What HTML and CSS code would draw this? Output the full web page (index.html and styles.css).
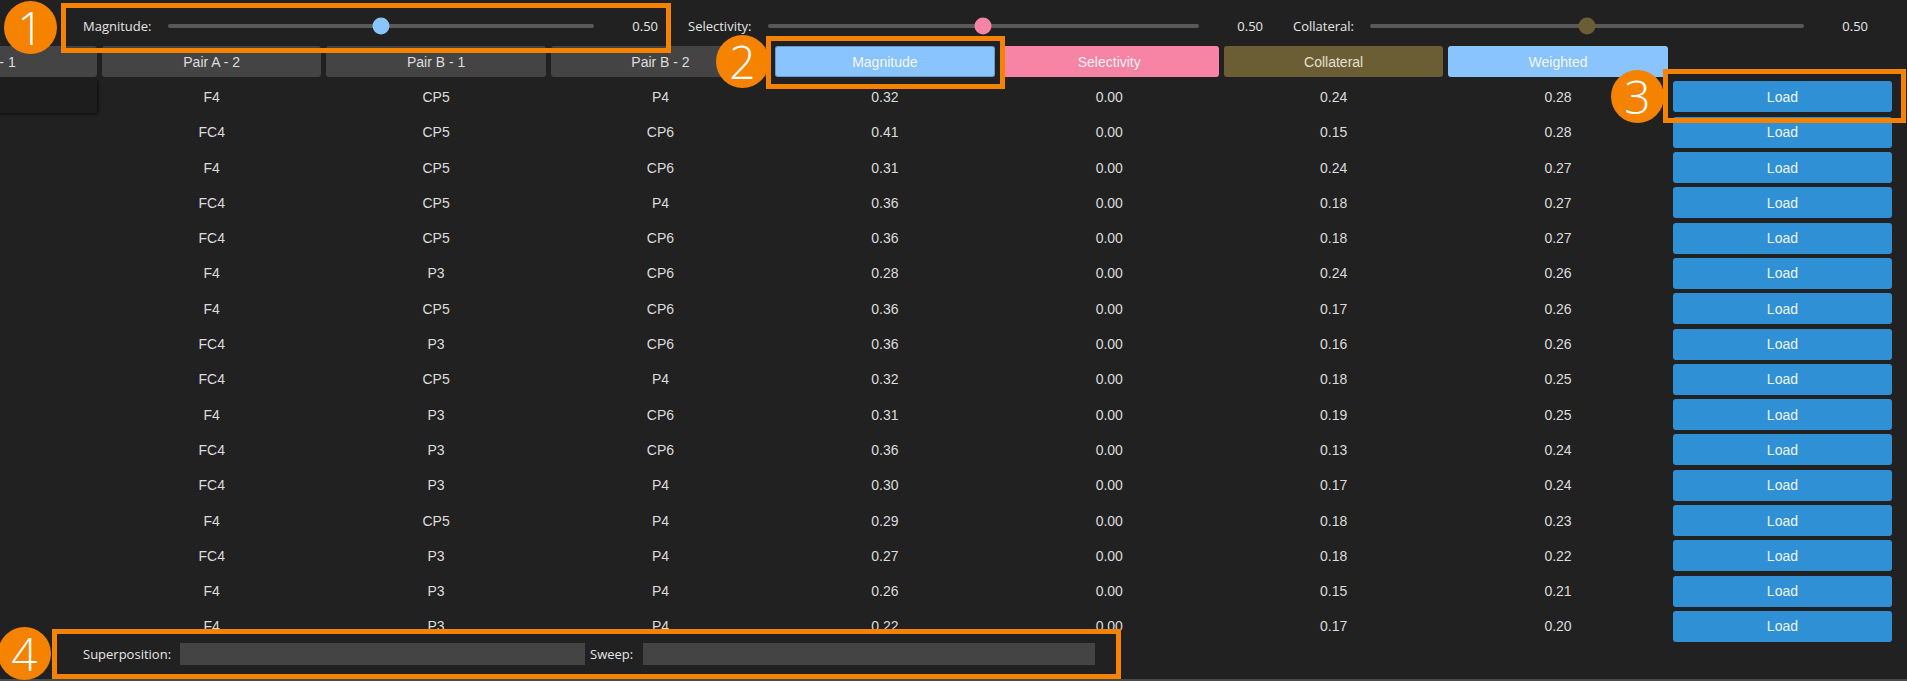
FILE: index.html
```html
<!DOCTYPE html>
<html>
<head>
<meta charset="utf-8">
<link rel="stylesheet" href="styles.css">
</head>
<body>
<div class="app">
  <div class="sliders">
    <div class="sg">
      <span class="sl">Magnitude:</span>
      <div class="track"><div class="thumb t-mag" style="left:50%"></div></div>
      <span class="sv">0.50</span>
    </div>
    <div class="sg">
      <span class="sl">Selectivity:</span>
      <div class="track"><div class="thumb t-sel" style="left:50%"></div></div>
      <span class="sv">0.50</span>
    </div>
    <div class="sg">
      <span class="sl">Collateral:</span>
      <div class="track"><div class="thumb t-col" style="left:50%"></div></div>
      <span class="sv">0.50</span>
    </div>
  </div>

  <div class="table-clip">
    <div class="grid" id="grid">
      <div class="cell h">Pair A - 1</div>
      <div class="cell h">Pair A - 2</div>
      <div class="cell h">Pair B - 1</div>
      <div class="cell h">Pair B - 2</div>
      <div class="cell h h-mag">Magnitude</div>
      <div class="cell h h-sel">Selectivity</div>
      <div class="cell h h-col">Collateral</div>
      <div class="cell h h-wei">Weighted</div>
      <div class="cell blank"></div>
    </div>
  </div>

  <div class="bottom-bar">
    <span class="bl">Superposition:</span>
    <div class="inp inp-sup"></div>
    <span class="bl bl-sweep">Sweep:</span>
    <div class="inp inp-sweep"></div>
  </div>
  <div class="bottom-line"></div>

  <div class="ann-box box1"></div>
  <div class="ann-box box2"></div>
  <div class="ann-box box3"></div>
  <div class="ann-box box4"></div>
  <div class="ann-num n1">1</div>
  <div class="ann-num n2">2</div>
  <div class="ann-num n3">3</div>
  <div class="ann-num n4">4</div>
</div>
<script src="app.js"></script>
</body>
</html>
```

FILE: app.js
```js
var rows = [
  ["F4","CP5","P4","0.32","0.00","0.24","0.28"],
  ["FC4","CP5","CP6","0.41","0.00","0.15","0.28"],
  ["F4","CP5","CP6","0.31","0.00","0.24","0.27"],
  ["FC4","CP5","P4","0.36","0.00","0.18","0.27"],
  ["FC4","CP5","CP6","0.36","0.00","0.18","0.27"],
  ["F4","P3","CP6","0.28","0.00","0.24","0.26"],
  ["F4","CP5","CP6","0.36","0.00","0.17","0.26"],
  ["FC4","P3","CP6","0.36","0.00","0.16","0.26"],
  ["FC4","CP5","P4","0.32","0.00","0.18","0.25"],
  ["F4","P3","CP6","0.31","0.00","0.19","0.25"],
  ["FC4","P3","CP6","0.36","0.00","0.13","0.24"],
  ["FC4","P3","P4","0.30","0.00","0.17","0.24"],
  ["F4","CP5","P4","0.29","0.00","0.18","0.23"],
  ["FC4","P3","P4","0.27","0.00","0.18","0.22"],
  ["F4","P3","P4","0.26","0.00","0.15","0.21"],
  ["F4","P3","P4","0.22","0.00","0.17","0.20"]
];
var g = document.getElementById("grid");
rows.forEach(function (r, i) {
  var first = document.createElement("div");
  first.className = i === 0 ? "cell shade" : "cell blank";
  g.appendChild(first);
  r.forEach(function (v) {
    var c = document.createElement("div");
    c.className = "cell d";
    c.textContent = v;
    g.appendChild(c);
  });
  var b = document.createElement("div");
  b.className = "cell btn";
  b.textContent = "Load";
  g.appendChild(b);
});
```

FILE: styles.css
```css
html, body {
  margin: 0;
  padding: 0;
  background: #212121;
  overflow: hidden;
}
.app {
  position: relative;
  width: 1907px;
  height: 681px;
  overflow: hidden;
  background: #212121;
  color: #dcdcdc;
  font-family: "Liberation Sans", Arial, sans-serif;
  font-size: 14px;
}
.sliders {
  display: flex;
  height: 44px;
  box-sizing: border-box;
  padding: 8px 24px 0 68px;
  font-family: "Open Sans", "Noto Sans", sans-serif;
  font-size: 13px;
  color: #e6e6e6;
}
.sg {
  flex: 1;
  display: flex;
  align-items: center;
  padding: 0 15px;
  height: 36px;
}
.sl {
  white-space: nowrap;
}
.track {
  flex: 1;
  position: relative;
  height: 4px;
  border-radius: 2px;
  background: #595959;
  margin-left: 16px;
}
.thumb {
  position: absolute;
  top: 50%;
  width: 17px;
  height: 17px;
  border-radius: 50%;
  transform: translate(-50%, -50%);
}
.t-mag { background: #8ac4ff; }
.t-sel { background: #f783a5; }
.t-col { background: #6b5e35; }
.sv {
  width: 64px;
  text-align: right;
}

.table-clip {
  overflow: hidden;
  width: 1907px;
}
.grid {
  display: grid;
  grid-template-columns: repeat(9, 224.4px);
  grid-auto-rows: 35.3px;
  margin-left: -124.9px;
}
.cell {
  margin: 2.15px 2.5px;
  display: flex;
  align-items: center;
  justify-content: center;
  white-space: nowrap;
}
.h {
  background: #444444;
  border-radius: 3px;
  color: #dedede;
}
.h-mag {
  background: #8ac4ff;
  color: #f2f6ff;
  box-shadow: inset 0 0 0 1px rgba(40, 80, 130, 0.35);
}
.h-sel { background: #f783a5; color: #fdf0f4; }
.h-col { background: #6b5e35; color: #e4e0d2; }
.h-wei { background: #8ac4ff; color: #f2f6ff; }
.d { color: #dcdcdc; }
.shade {
  background: #1d1d1d;
  margin: 0 2.5px 2px 0;
  box-shadow: 1px 1px 3px rgba(0, 0, 0, 0.7);
}
.btn {
  background: #3090d6;
  border-radius: 3px;
  color: #eef5fc;
}

.bottom-bar {
  position: absolute;
  left: 57px;
  top: 634px;
  width: 1059px;
  height: 40px;
  background: #212121;
  display: flex;
  align-items: center;
  padding-left: 26px;
  box-sizing: border-box;
  font-family: "Open Sans", "Noto Sans", sans-serif;
  font-size: 13px;
  color: #e6e6e6;
}
.bl { white-space: nowrap; }
.inp {
  height: 22px;
  background: #444444;
}
.inp-sup {
  width: 405px;
  margin-left: 9px;
}
.bl-sweep { margin-left: 5px; }
.inp-sweep {
  width: 452px;
  margin-left: 10px;
}
.bottom-line {
  position: absolute;
  left: 0;
  right: 0;
  bottom: 0;
  height: 2px;
  background: #4a4a4a;
}

.ann-box {
  position: absolute;
  border: 5px solid #f58300;
  box-sizing: border-box;
}
.box1 { left: 61px; top: 3px; width: 610px; height: 50px; }
.box2 { left: 766px; top: 36px; width: 239px; height: 53px; }
.box3 { left: 1663px; top: 69px; width: 243px; height: 54px; }
.box4 { left: 52px; top: 629px; width: 1069px; height: 50px; }
.ann-num {
  position: absolute;
  width: 53px;
  height: 53px;
  border-radius: 50%;
  background: #f58300;
  color: #ffffff;
  font-family: "Open Sans", "Noto Sans", sans-serif;
  font-size: 46px;
  font-weight: 300;
  line-height: 53px;
  text-align: center;
}
.n1 { left: 4px; top: 1px; }
.n2 { left: 716px; top: 35px; }
.n3 { left: 1611px; top: 70px; }
.n4 { left: -2px; top: 627px; }
```
